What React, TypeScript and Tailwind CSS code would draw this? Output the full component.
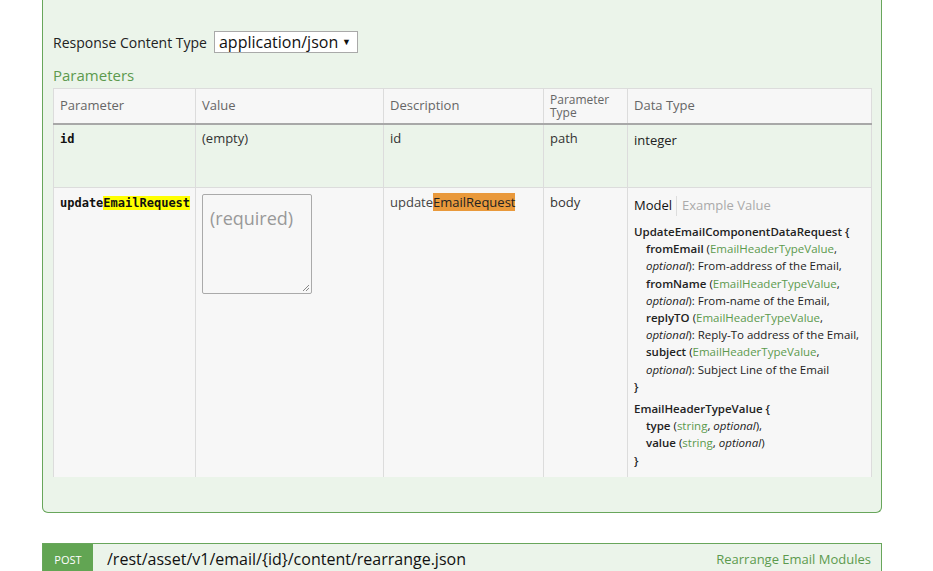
import React from "react";

const sans = { fontFamily: '"Open Sans", "Liberation Sans", sans-serif' };
const mono = { fontFamily: '"DejaVu Sans Mono", "Liberation Mono", monospace' };

function Prop({ name, type, desc, last }: { name: string; type: string; desc: string; last?: boolean }) {
  return (
    <div className="pl-[12px] whitespace-nowrap">
      <span className="font-semibold text-[#222]">{name}</span> (
      <span className="text-[#5c9a4e]">{type}</span>,
      <br />
      <span className="italic">optional</span>): {desc}
      {last ? "" : ","}
    </div>
  );
}

export default function App() {
  return (
    <div className="w-[933px] h-[571px] overflow-hidden bg-white text-[#333]" style={sans}>
      <div className="ml-[42px] w-[840px]">
        <div className="border border-t-0 border-[#68a65b] rounded-b-[6px] bg-[#ebf4ea] px-[10px] pt-[31px] pb-[35px]">
          <div className="flex items-center gap-[7px] h-[22px]">
            <span className="text-[14px] text-[#222]">Response Content Type</span>
            <div className="h-[22px] w-[144px] border border-[#a9a9a9] bg-white flex items-center pl-[4px] pr-[6px] justify-between">
              <span className="text-[16px] text-[#111] leading-none">application/json</span>
              <span className="text-[9px] text-[#111]">▼</span>
            </div>
          </div>
          <div className="mt-[12px] text-[15px] text-[#5c9a4e] leading-[20px] mb-[3px]">Parameters</div>
          <table className="w-[818px] table-fixed border-collapse text-[13px]">
            <colgroup>
              <col className="w-[142px]" />
              <col className="w-[188px]" />
              <col className="w-[160px]" />
              <col className="w-[84px]" />
              <col className="w-[244px]" />
            </colgroup>
            <thead>
              <tr className="bg-[#f7f7f7] h-[35px] text-[#666] text-[13px]">
                <th className="border border-[#dcdcdc] border-b-2 border-b-[#a8a8a8] font-normal text-left px-[6px]">Parameter</th>
                <th className="border border-[#dcdcdc] border-b-2 border-b-[#a8a8a8] font-normal text-left px-[6px]">Value</th>
                <th className="border border-[#dcdcdc] border-b-2 border-b-[#a8a8a8] font-normal text-left px-[6px]">Description</th>
                <th className="border border-[#dcdcdc] border-b-2 border-b-[#a8a8a8] font-normal text-left px-[6px] text-[12px] leading-[13px]">
                  Parameter
                  <br />
                  Type
                </th>
                <th className="border border-[#dcdcdc] border-b-2 border-b-[#a8a8a8] font-normal text-left px-[6px]">Data Type</th>
              </tr>
            </thead>
            <tbody>
              <tr className="h-[64px] align-top text-[#333]">
                <td className="border border-[#dcdcdc] px-[6px] pt-[4px]">
                  <span className="font-bold text-[12px] text-[#111]" style={mono}>id</span>
                </td>
                <td className="border border-[#dcdcdc] px-[6px] pt-[4px]">(empty)</td>
                <td className="border border-[#dcdcdc] px-[6px] pt-[4px]">id</td>
                <td className="border border-[#dcdcdc] px-[6px] pt-[4px]">path</td>
                <td className="border border-[#dcdcdc] px-[6px] pt-[6px] text-[#222]">integer</td>
              </tr>
              <tr className="bg-[#f7f7f7] align-top">
                <td className="border border-[#dcdcdc] border-b-0 px-[6px] pt-[5px]">
                  <span className="font-bold text-[12px] text-[#111]" style={mono}>
                    update<span className="bg-[#ffff00]">EmailRequest</span>
                  </span>
                </td>
                <td className="border border-[#dcdcdc] border-b-0 px-[6px] pt-[6px]">
                  <div className="w-[110px] h-[100px] border border-[#aaa] rounded-[2px] bg-[#f7f7f7] relative">
                    <span className="absolute left-[7px] top-[10px] text-[18px] text-[#999]">(required)</span>
                    <svg className="absolute right-[1px] bottom-[1px]" width="8" height="8" viewBox="0 0 8 8">
                      <path d="M7 1 L1 7 M7 4 L4 7" stroke="#888" strokeWidth="1" />
                    </svg>
                  </div>
                </td>
                <td className="border border-[#dcdcdc] border-b-0 px-[6px] pt-[5px] text-[#444]">
                  update<span className="bg-[#e9993b] text-[#222]">EmailRequest</span>
                </td>
                <td className="border border-[#dcdcdc] border-b-0 px-[6px] pt-[5px]">body</td>
                <td className="border border-[#dcdcdc] border-b-0 px-[6px] pt-[8px] pb-[8px]">
                  <div className="flex items-center text-[13px] h-[20px]">
                    <span className="text-[#111] pr-[4px]">Model</span>
                    <span className="w-px h-[20px] bg-[#ddd]" />
                    <span className="text-[#aaa] pl-[5px]">Example Value</span>
                  </div>
                  <div className="mt-[7px] text-[11.5px] leading-[17.2px] text-[#222]">
                    <div className="font-semibold">UpdateEmailComponentDataRequest {"{"}</div>
                    <Prop name="fromEmail" type="EmailHeaderTypeValue" desc="From-address of the Email" />
                    <Prop name="fromName" type="EmailHeaderTypeValue" desc="From-name of the Email" />
                    <Prop name="replyTO" type="EmailHeaderTypeValue" desc="Reply-To address of the Email" />
                    <Prop name="subject" type="EmailHeaderTypeValue" desc="Subject Line of the Email" last />
                    <div className="font-semibold">{"}"}</div>
                    <div className="font-semibold mt-[5px]">EmailHeaderTypeValue {"{"}</div>
                    <div className="pl-[12px] whitespace-nowrap">
                      <span className="font-semibold">type</span> (<span className="text-[#5c9a4e]">string</span>,{" "}
                      <span className="italic">optional</span>),
                    </div>
                    <div className="pl-[12px] whitespace-nowrap">
                      <span className="font-semibold">value</span> (<span className="text-[#5c9a4e]">string</span>,{" "}
                      <span className="italic">optional</span>)
                    </div>
                    <div className="font-semibold">{"}"}</div>
                  </div>
                </td>
              </tr>
            </tbody>
          </table>
        </div>
        <div className="mt-[30px] border border-[#68a65b] bg-[#ebf4ea] flex items-stretch h-[40px]">
          <div className="w-[50px] bg-[#62a553] text-white text-[11px] flex items-start justify-center pt-[8px]">POST</div>
          <div className="flex-1 flex items-start justify-between pl-[14px] pr-[10px] pt-[3px]">
            <span className="text-[16px] leading-[24px] text-[#111]">/rest/asset/v1/email/{"{id}"}/content/rearrange.json</span>
            <span className="text-[13px] text-[#5c9a4e] pt-[3px]">Rearrange Email Modules</span>
          </div>
        </div>
      </div>
    </div>
  );
}
